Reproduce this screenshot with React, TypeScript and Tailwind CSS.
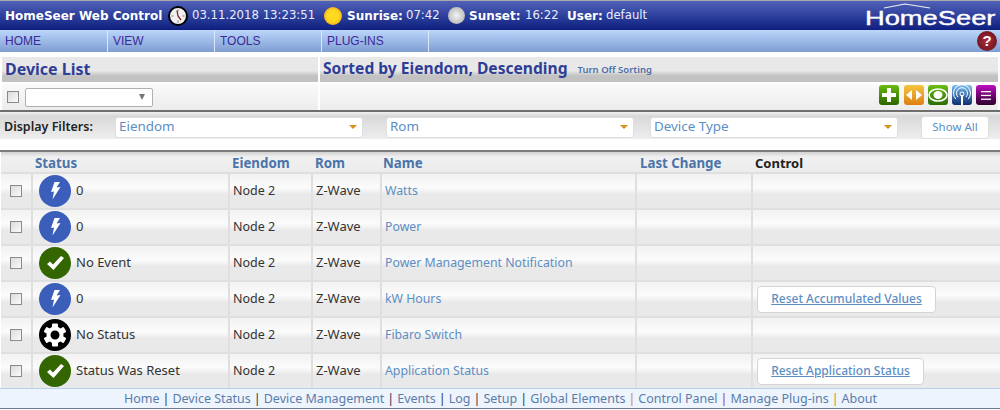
import React from "react";

const Bolt = () => (
  <span className="flex h-8 w-8 shrink-0 items-center justify-center rounded-full bg-[#3c5ebb]">
    <svg width="14" height="20" viewBox="0 0 14 20"><path d="M6.5 1 L12 1 L8.5 6.5 L12.5 6 L4.5 18.5 L6 10.5 L3 11 Z" fill="#fff" /></svg>
  </span>
);
const Check = () => (
  <span className="flex h-8 w-8 shrink-0 items-center justify-center rounded-full bg-[#336600]">
    <svg width="20" height="18" viewBox="0 0 20 18"><path d="M2 10 L5 7.5 L8 10.5 L16 2 L19 4 L8.5 16 Z" fill="#fff" /></svg>
  </span>
);
const Gear = () => (
  <span className="flex h-8 w-8 shrink-0 items-center justify-center rounded-full bg-black">
    <svg width="26" height="26" viewBox="0 0 26 26">
      <g fill="#fff">
        {[0, 60, 120, 180, 240, 300].map((a) => (
          <rect key={a} x="10" y="1.5" width="6" height="6" rx="1" transform={`rotate(${a} 13 13)`} />
        ))}
      </g>
      <circle cx="13" cy="13" r="6.5" fill="none" stroke="#fff" strokeWidth="4" />
    </svg>
  </span>
);

const Box = () => <span className="block h-[12px] w-[12px] border border-[#8a8a8a] bg-linear-to-br from-[#dcdcdc] to-[#fafafa]" />;

const Caret = () => <span className="h-0 w-0 border-x-[4px] border-t-[4px] border-x-transparent border-t-[#d8901c]" />;

const Filter = ({ label, w }: { label: string; w: string }) => (
  <div className={`flex h-[21px] items-center justify-between rounded-[3px] border border-[#dedede] bg-white pb-[1px] pl-[3px] pr-[5px] text-[13.4px] text-[#5c8ec4] ${w}`}>
    <span>{label}</span>
    <Caret />
  </div>
);

const rows = [
  { icon: <Bolt />, status: "0", name: "Watts" },
  { icon: <Bolt />, status: "0", name: "Power" },
  { icon: <Check />, status: "No Event", name: "Power Management Notification" },
  { icon: <Bolt />, status: "0", name: "kW Hours", control: "Reset Accumulated Values", cw: "w-[179px]" },
  { icon: <Gear />, status: "No Status", name: "Fibaro Switch" },
  { icon: <Check />, status: "Status Was Reset", name: "Application Status", control: "Reset Application Status", cw: "w-[167px]" },
];

const cell = "flex items-center bg-linear-to-b from-[#f2f2f2] via-[#fbfbfb] via-40% to-[#e9e9e9] to-60%";
const cols = "grid grid-cols-[30px_195px_81px_67px_253px_114px_1fr] gap-x-[2px]";

const Tool = ({ children, cls }: { children: React.ReactNode; cls: string }) => (
  <span className={`flex h-[20px] w-[20px] items-center justify-center overflow-hidden rounded-[3px] ${cls}`}>{children}</span>
);

export default function App() {
  return (
    <div className="h-[410px] w-[1000px] overflow-hidden bg-white text-[13px] text-[#333]" style={{ fontFamily: "'Noto Sans', Tahoma, sans-serif" }}>
      {/* header */}
      <div className="flex h-[30px] items-center border-t border-[#a8a8a8] bg-linear-to-b from-[#5261b9] to-[#0f1e80] pl-[5px] text-[11.7px] text-[#e8ecff]" style={{ fontFamily: "'DejaVu Sans', sans-serif" }}>
        <b className="w-[155px] whitespace-nowrap text-[12px] text-white">HomeSeer Web Control</b>
        <svg className="ml-[8px]" width="20" height="20" viewBox="0 0 20 20">
          <circle cx="10" cy="10" r="9" fill="#f0f0f0" stroke="#000" strokeWidth="2" />
          <path d="M10 3.5v2M16.5 10h-2M10 16.5v-2M3.5 10h2" stroke="#777" strokeWidth="1" />
          <path d="M9 4.5 L10 10 L13 14" stroke="#8a2020" strokeWidth="1.3" fill="none" />
        </svg>
        <span className="ml-[4px] w-[124px] whitespace-nowrap">03.11.2018 13:23:51</span>
        <span className="ml-[8px] h-[18px] w-[18px] rounded-full bg-radial from-[#ffd820] from-45% to-[#e88810]" />
        <b className="ml-[5px] w-[54px] text-[12px] text-white">Sunrise:</b>
        <span className="ml-[5px] w-[34px]">07:42</span>
        <span className="ml-[8px] h-[17px] w-[17px] rounded-full bg-radial from-[#f4f4f4] to-[#a8a8a8]" />
        <b className="ml-[4px] w-[53px] text-[12px] text-white">Sunset:</b>
        <span className="ml-[3px] w-[33px]">16:22</span>
        <b className="ml-[9px] w-[34px] text-[12px] text-white">User:</b>
        <span className="ml-[5px]">default</span>
        <div className="relative ml-auto mr-[5px] flex h-[24px] w-[129px] items-end justify-center">
          <svg className="absolute left-[17px] top-[-1px]" width="48" height="6" viewBox="0 0 48 6"><path d="M1 5 L22 1 L47 5" stroke="#f0f0f0" strokeWidth="1.2" fill="none" /></svg>
          <span className="text-[21px] leading-[20px] text-white [-webkit-text-stroke:0.4px_white]" style={{ fontFamily: "'Liberation Sans', sans-serif", transform: "scaleX(1.3)" }}>HomeSeer</span>
        </div>
      </div>
      {/* nav */}
      <div className="flex h-[22px] bg-linear-to-b from-[#bcd6fb] to-[#7e9dd2] text-[12px] text-[#3d2a96]" style={{ fontFamily: "'Liberation Sans', sans-serif" }}>
        {["HOME", "VIEW", "TOOLS", "PLUG-INS"].map((n, i) => (
          <div key={n} className={`flex items-center border-r border-[#dce8fa] pl-[5px] ${i === 0 ? "w-[108px]" : "w-[107px]"}`}>{n}</div>
        ))}
        <span className="ml-auto mr-[3px] flex h-[20px] w-[20px] items-center justify-center self-center rounded-full bg-radial from-[#b02c3c] to-[#5e0e18] text-[15px] font-bold text-white">?</span>
      </div>
      {/* device list panel */}
      <div className="mt-[5px] h-[55px] border-b-2 border-[#6e6e6e]">
        <div className="grid h-full grid-cols-[316px_1fr] gap-x-[2px] px-[2px]">
          <div className="flex flex-col">
            <div className="flex h-[25px] items-center bg-linear-to-b from-[#e8e8e8] from-55% to-[#c2c2c2] to-75% pb-[2px] pl-[3px] text-[16px] font-bold text-[#2e3e96]">Device List</div>
            <div className="mt-[2px] flex flex-1 items-center gap-[6px] bg-linear-to-b from-[#fafafa] to-[#ececec] pl-[5px]">
              <Box />
              <div className="flex h-[19px] w-[128px] items-center justify-end rounded-[2px] border border-[#b0b0b0] bg-white pr-[7px]">
                <span className="h-0 w-0 border-x-[3.5px] border-t-[6px] border-x-transparent border-t-[#777]" />
              </div>
            </div>
          </div>
          <div className="flex flex-col">
            <div className="flex h-[25px] items-center bg-linear-to-b from-[#e8e8e8] from-55% to-[#c2c2c2] to-75% pb-[2px] pl-[3px]">
              <span className="text-[15.6px] font-bold text-[#2e3e96]">Sorted by Eiendom, Descending</span>
              <span className="ml-[10px] mt-[3px] text-[9.5px] font-semibold text-[#4a6ea8]">Turn Off Sorting</span>
            </div>
            <div className="mt-[2px] flex flex-1 items-start justify-end gap-[4px] bg-linear-to-b from-[#fafafa] to-[#ececec] pr-[2px] pt-[1px]">
              <Tool cls="bg-linear-to-b from-[#6cbc10] to-[#2c6400]">
                <svg width="14" height="14" viewBox="0 0 14 14"><path d="M5 0h4v5h5v4H9v5H5V9H0V5h5z" fill="#fff" /></svg>
              </Tool>
              <Tool cls="ml-[1px] bg-linear-to-b from-[#f4c440] to-[#dc8010]">
                <svg width="16" height="10" viewBox="0 0 16 10"><path d="M6 0v10L0 5zM10 0v10l6-5z" fill="#fff" /></svg>
              </Tool>
              <Tool cls="bg-linear-to-b from-[#68c010] to-[#2c6c04]">
                <svg width="20" height="14" viewBox="0 0 20 14"><ellipse cx="10" cy="7" rx="9" ry="6" fill="none" stroke="#fff" strokeWidth="1.6" /><ellipse cx="10" cy="7" rx="4.5" ry="4" fill="#fff" /></svg>
              </Tool>
              <Tool cls="bg-linear-to-b from-[#7cc0f0] to-[#102c70]">
                <svg width="18" height="20" viewBox="0 0 18 20" fill="none" stroke="#fff" strokeWidth="1"><circle cx="9" cy="9" r="2" /><path d="M5 12a5.5 5.5 0 1 1 8 0M2.8 14a8.5 8.5 0 1 1 12.4 0" /><path d="M9 10v10" strokeWidth="2" /></svg>
              </Tool>
              <Tool cls="bg-linear-to-b from-[#c010c0] to-[#300030]">
                <svg width="10" height="9" viewBox="0 0 10 9" fill="#fff"><rect width="10" height="1.3" /><rect y="3.8" width="10" height="1.3" /><rect y="7.6" width="10" height="1.3" /></svg>
              </Tool>
            </div>
          </div>
        </div>
      </div>
      {/* filters */}
      <div className="flex h-[27px] items-center bg-linear-to-b from-[#f0f0f0] via-[#d8d8d8] via-15% to-[#eeeeee] pl-[4px] pt-[3px]">
        <b className="w-[111px] whitespace-nowrap text-[12.5px] font-semibold text-[#222]">Display Filters:</b>
        <Filter label="Eiendom" w="w-[248px]" />
        <div className="w-[23px]" />
        <Filter label="Rom" w="w-[248px]" />
        <div className="w-[16px]" />
        <Filter label="Device Type" w="w-[248px]" />
        <div className="w-[23px]" />
        <span className="flex h-[23px] w-[68px] items-center justify-center rounded-[3px] border border-[#dedede] bg-white text-[11.5px] text-[#5c8ec4]">Show All</span>
      </div>
      {/* table */}
      <div className="mt-[11px] border-t-2 border-[#7c7c7c]">
        <div className={`${cols} ml-[1px] h-[20px] items-center bg-linear-to-b from-[#d2d2d2] from-0% via-[#f0f0f0] via-25% to-[#ececec] pt-[2px] text-[13.3px] font-bold text-[#4a74aa]`}>
          <span />
          <span className="pl-[2px]">Status</span>
          <span className="pl-[2px]">Eiendom</span>
          <span className="pl-[2px]">Rom</span>
          <span className="pl-[1px]">Name</span>
          <span className="pl-[3px]">Last Change</span>
          <span className="pl-[2px] text-[13px] text-[#222]">Control</span>
        </div>
        <div className="ml-[1px] bg-[#dfdfdf] pt-[2px]">
          {rows.map((r, i) => (
            <div key={i} className={`${cols} h-[34px] ${i ? "mt-[2px]" : ""}`}>
              <div className={`${cell} justify-center`}><Box /></div>
              <div className={`${cell} gap-[5px] pl-[6px]`}>{r.icon}<span>{r.status}</span></div>
              <div className={`${cell} pl-[3px] text-[12.5px]`}>Node 2</div>
              <div className={`${cell} pl-[3px]`}>Z-Wave</div>
              <div className={`${cell} pl-[3px] text-[12.3px] text-[#5c8ec4]`}>{r.name}</div>
              <div className={cell} />
              <div className={`${cell} pl-[4px]`}>
                {r.control && (
                  <span className={`flex h-[27px] items-center justify-center rounded-[4px] border border-[#d4d4d4] bg-white text-[12px] font-medium text-[#5c8ec4] underline ${r.cw}`}>{r.control}</span>
                )}
              </div>
            </div>
          ))}
        </div>
      </div>
      {/* footer */}
      <div className="flex h-[21px] items-center justify-center border-y border-t-[#b8d0f0] border-b-[#6a7a90] bg-[#edf4fe] pl-[1px] pt-[1px] text-[12.5px] text-[#5a7ca8]">
        {["Home", "Device Status", "Device Management", "Events", "Log", "Setup", "Global Elements", "Control Panel", "Manage Plug-ins", "About"].map((l, i) => (
          <React.Fragment key={l}>
            {i > 0 && <span className={`mx-[3px] ${i === 7 || i === 9 ? "text-[#d08a20]" : i === 8 ? "text-[#a03090]" : "text-[#334]"}`}>|</span>}
            <span>{l}</span>
          </React.Fragment>
        ))}
      </div>
    </div>
  );
}
